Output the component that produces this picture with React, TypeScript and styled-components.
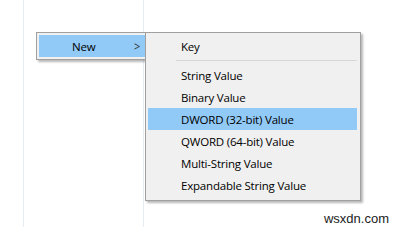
import styled, { createGlobalStyle } from "styled-components";

const GlobalStyle = createGlobalStyle`
  html, body {
    margin: 0;
    padding: 0;
    background: #ffffff;
  }
  body {
    font-family: "Open Sans", "Noto Sans", sans-serif;
  }
`;

const Canvas = styled.div`
  position: relative;
  width: 401px;
  height: 227px;
  overflow: hidden;
  background: #ffffff;
  display: flex;
`;

const Pane = styled.div`
  margin-left: 23px;
  width: 119px;
  height: 100%;
  border-left: 1px solid #e4ecf4;
  border-right: 1px solid #e4ecf4;
`;

const Menu = styled.div<{ $left: number; $top: number; $width: number; $padBottom?: number }>`
  position: absolute;
  left: ${(p) => p.$left}px;
  top: ${(p) => p.$top}px;
  width: ${(p) => p.$width}px;
  box-sizing: border-box;
  padding: 2px 3px ${(p) => p.$padBottom ?? 2}px 2px;
  background: #f0f0f0;
  border: 1px solid #a0a0a0;
  box-shadow: 2px 2px 2px rgba(0, 0, 0, 0.28);
  display: flex;
  flex-direction: column;
`;

const Item = styled.div<{ $active?: boolean }>`
  height: 22px;
  display: flex;
  align-items: center;
  justify-content: space-between;
  padding: 0 8px 0 33px;
  font-size: 11.5px;
  letter-spacing: -0.2px;
  color: #000000;
  background: ${(p) => (p.$active ? "#91c9f7" : "transparent")};
  white-space: nowrap;
`;

const Arrow = styled.span`
  font-size: 11px;
  color: #333333;
  transform: scaleY(1.1);
`;

const Separator = styled.div`
  height: 1px;
  margin: 3px 0 3px 28px;
  background: #d7d7d7;
`;

const Watermark = styled.div`
  position: absolute;
  right: 12px;
  bottom: 1px;
  font-family: "Liberation Sans", Arial, sans-serif;
  font-size: 13px;
  color: #222222;
`;

const items = [
  "String Value",
  "Binary Value",
  "DWORD (32-bit) Value",
  "QWORD (64-bit) Value",
  "Multi-String Value",
  "Expandable String Value",
];

export default function App() {
  return (
    <>
      <GlobalStyle />
      <Canvas>
        <Pane />
        <Menu $left={36} $top={32} $width={116}>
          <Item $active>
            New
            <Arrow>&gt;</Arrow>
          </Item>
        </Menu>
        <Menu $left={145} $top={32} $width={216} $padBottom={4}>
          <Item>Key</Item>
          <Separator />
          {items.map((label) => (
            <Item key={label} $active={label.startsWith("DWORD")}>
              {label}
            </Item>
          ))}
        </Menu>
        <Watermark>wsxdn.com</Watermark>
      </Canvas>
    </>
  );
}
